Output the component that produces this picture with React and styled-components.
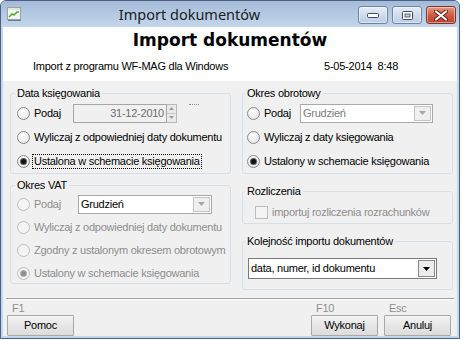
import React from 'react'
import styled, { createGlobalStyle } from 'styled-components'

const GlobalStyle = createGlobalStyle`
  html, body {
    margin: 0;
    padding: 0;
    background: #fff;
  }
  body {
    font-family: 'Liberation Sans', Arial, sans-serif;
    font-size: 11px;
    line-height: 13px;
    letter-spacing: -0.25px;
    color: #000;
  }
`

const Window = styled.div`
  width: 460px;
  height: 339px;
  box-sizing: border-box;
  border: 1px solid #4a6185;
  border-radius: 6px 6px 0 0;
  background: #c3d6ec;
  padding: 0 2px 2px;
  display: flex;
  flex-direction: column;
`

const TitleBar = styled.div`
  height: 26px;
  flex: none;
  display: flex;
  align-items: flex-start;
  box-sizing: border-box;
  margin: 0 -2px;
  padding: 5px 3px 0 6px;
  border-radius: 5px 5px 0 0;
  background: linear-gradient(#a4bbd8, #c3d6ec);
`

const TitleIcon = styled.svg`
  width: 14px;
  height: 14px;
  margin-top: 1px;
  flex: none;
`

const TitleText = styled.div`
  flex: 1;
  text-align: center;
  font-family: 'Noto Sans', 'Open Sans', sans-serif;
  font-size: 14.5px;
  line-height: 18px;
  letter-spacing: 0;
  color: #1c1c1c;
  margin-top: -1px;
`

const CaptionButtons = styled.div`
  display: flex;
  gap: 4px;
`

const CaptionButton = styled.span`
  width: 30px;
  height: 18px;
  box-sizing: border-box;
  border-radius: 3px;
  border: 1px solid ${(p) => (p.$close ? '#7e3528' : '#71849e')};
  background: ${(p) =>
    p.$close
      ? 'linear-gradient(#e49a86, #cf5c43 50%, #bf4128)'
      : 'linear-gradient(#e6eef7, #cfdcec 50%, #bccde3)'};
  box-shadow: inset 0 0 0 1px rgba(255, 255, 255, 0.45);
  display: flex;
  align-items: center;
  justify-content: center;
`

const Client = styled.div`
  flex: 1;
  background: #f0f0f0;
  display: flex;
  flex-direction: column;
`

const Header = styled.div`
  height: 54px;
  flex: none;
  background: #fff;
  display: flex;
  flex-direction: column;
`

const HeaderTitle = styled.h1`
  margin: 2px 0 0;
  font-family: 'DejaVu Sans', Verdana, sans-serif;
  font-weight: bold;
  font-size: 17px;
  line-height: 22px;
  letter-spacing: 0;
  text-align: center;
`

const Info = styled.div`
  margin-top: 9px;
  display: flex;
  justify-content: space-between;
  padding: 0 59px 0 30px;
`

const DateStamp = styled.span`
  white-space: pre;
`

const Body = styled.div`
  padding: 6px 0 0 7px;
  display: grid;
  grid-template-columns: 221px 211px;
  column-gap: 11px;
`

const Column = styled.div`
  display: flex;
  flex-direction: column;
  gap: ${(p) => p.$gap}px;
`

const Group = styled.fieldset`
  margin: 0;
  min-width: 0;
  border: 1px solid #d5dfe5;
  border-radius: 3px;
  padding: ${(p) => p.$pad};
  display: flex;
  flex-direction: column;
  gap: ${(p) => p.$gap || 0}px;
`

const Legend = styled.legend`
  padding: 0 2px;
  margin-left: ${(p) => p.$shift || -2}px;
  line-height: 13px;
`

const Row = styled.div`
  height: ${(p) => p.$h || 20}px;
  display: flex;
  align-items: center;
`

const RadioMark = styled.span`
  width: 13px;
  height: 13px;
  flex: none;
  box-sizing: border-box;
  border-radius: 50%;
  border: 1px solid ${(p) => (p.$disabled ? '#bdbdbd' : '#8a8a8a')};
  background: ${(p) =>
    p.$disabled
      ? '#f4f4f4'
      : 'radial-gradient(circle at 40% 35%, #ffffff, #ececec 60%, #d6d6d6)'};
  display: flex;
  align-items: center;
  justify-content: center;
  &::after {
    content: '';
    display: ${(p) => (p.$checked ? 'block' : 'none')};
    width: 5px;
    height: 5px;
    border-radius: 50%;
    background: ${(p) => (p.$disabled ? '#8e8e8e' : '#111')};
    box-shadow: 0 0 0 1px ${(p) => (p.$disabled ? '#b4b4b4' : '#5a5a5a')};
  }
`

const CheckMark = styled.span`
  width: 13px;
  height: 13px;
  flex: none;
  box-sizing: border-box;
  border: 1px solid #bdbdbd;
  background: #f4f4f4;
`

const OptionLabel = styled.span`
  margin-left: 3px;
  padding: 0 1px;
  width: ${(p) => (p.$w ? `${p.$w}px` : 'auto')};
  box-sizing: border-box;
  white-space: nowrap;
  color: ${(p) => (p.$disabled ? '#8d8d8d' : '#000')};
  outline: ${(p) => (p.$focused ? '1px dotted #000' : 'none')};
  outline-offset: 0;
`

const DateField = styled.div`
  width: 94px;
  height: 19px;
  box-sizing: border-box;
  border: 1px solid #a6a6a6;
  background: #f0f0f0;
  color: #6d6d6d;
  display: flex;
  align-items: center;
  justify-content: flex-end;
  padding-right: 2px;
`

const Spinner = styled.div`
  width: 10px;
  height: 19px;
  box-sizing: border-box;
  border: 1px solid #b8b8b8;
  border-left: none;
  display: flex;
  flex-direction: column;
`

const SpinHalf = styled.span`
  flex: 1;
  background: #e9e9e9;
  border-bottom: ${(p) => (p.$top ? '1px solid #c8c8c8' : 'none')};
  display: flex;
  align-items: center;
  justify-content: center;
`

const Dots = styled.span`
  align-self: flex-start;
  margin: 1px 0 0 12px;
  width: 10px;
  border-top: 1px dotted #8a8a8a;
`

const Combo = styled.div`
  width: ${(p) => p.$w}px;
  height: ${(p) => p.$h}px;
  box-sizing: border-box;
  border: 1px solid ${(p) => (p.$dark ? '#7a7a7a' : '#a9a9a9')};
  background: #fff;
  display: flex;
`

const ComboText = styled.span`
  flex: 1;
  padding-left: 2px;
  display: flex;
  align-items: center;
  color: ${(p) => (p.$muted ? '#7a7a7a' : '#000')};
`

const ComboButton = styled.span`
  width: 17px;
  margin: 1px;
  box-sizing: border-box;
  border: 1px solid ${(p) => (p.$dark ? '#8a8a8a' : '#c4c4c4')};
  background: ${(p) => (p.$dark ? '#ececec' : '#efefef')};
  display: flex;
  align-items: center;
  justify-content: center;
`

const Footer = styled.div`
  margin-top: 8px;
  padding: 0 6px 0 4px;
`

const Separator = styled.div`
  height: 1px;
  background: #a0a0a0;
  border-bottom: 1px solid #fff;
  margin: 0 -3px 2px -1px;
`

const Actions = styled.div`
  display: flex;
  gap: 6px;
`

const Spacer = styled.div`
  flex: 1;
`

const Action = styled.div`
  display: flex;
  flex-direction: column;
`

const KeyHint = styled.span`
  padding-left: 5px;
  color: #8f8f8f;
  height: 13px;
`

const Button = styled.button`
  width: 67px;
  height: 21px;
  margin: 0;
  padding: 0;
  font: inherit;
  letter-spacing: inherit;
  color: #000;
  border: 1px solid #a9a9a9;
  border-radius: 1px;
  background: linear-gradient(#f3f3f3, #e6e6e6 50%, #dcdcdc);
`

const Triangle = ({ color }) => (
  <svg width="7" height="4" viewBox="0 0 7 4">
    <polygon points="0,0 7,0 3.5,4" fill={color} />
  </svg>
)

const SpinArrow = ({ up }) => (
  <svg width="5" height="3" viewBox="0 0 5 3">
    <polygon points={up ? '0,3 5,3 2.5,0' : '0,0 5,0 2.5,3'} fill="#9a9a9a" />
  </svg>
)

const Radio = ({ checked, disabled, focused, w, children }) => (
  <>
    <RadioMark $checked={checked} $disabled={disabled} />
    <OptionLabel $disabled={disabled} $focused={focused} $w={w}>
      {children}
    </OptionLabel>
  </>
)

const App = () => {
  return (
    <>
      <GlobalStyle />
      <Window>
        <TitleBar>
          <TitleIcon viewBox="0 0 14 14">
            <rect x="0.5" y="0.5" width="13" height="12" fill="#f2f4f2" stroke="#9aa29a" />
            <rect x="1" y="1" width="12" height="2" fill="#dfe6df" />
            <polyline points="2,10 5,7 7,8 10,5 12,5" fill="none" stroke="#5aa83c" strokeWidth="1.5" />
            <line x1="1" y1="13.5" x2="14" y2="13.5" stroke="#6f7f8f" />
          </TitleIcon>
          <TitleText>Import dokumentów</TitleText>
          <CaptionButtons>
            <CaptionButton>
              <svg width="12" height="5" viewBox="0 0 12 5">
                <rect x="0.5" y="0.5" width="11" height="4" rx="1" fill="#fff" stroke="#3b4a5e" />
              </svg>
            </CaptionButton>
            <CaptionButton>
              <svg width="11" height="9" viewBox="0 0 11 9">
                <rect x="0.5" y="0.5" width="10" height="8" rx="1" fill="#fff" stroke="#3b4a5e" />
                <rect x="3" y="3" width="5" height="3" fill="#c3d3e6" stroke="#3b4a5e" strokeWidth="0.8" />
              </svg>
            </CaptionButton>
            <CaptionButton $close>
              <svg width="14" height="11" viewBox="0 0 14 11">
                <path d="M2 1.5 L12 9.5 M12 1.5 L2 9.5" stroke="#5c2118" strokeWidth="4" strokeLinecap="round" />
                <path d="M2 1.5 L12 9.5 M12 1.5 L2 9.5" stroke="#fff" strokeWidth="2.2" strokeLinecap="round" />
              </svg>
            </CaptionButton>
          </CaptionButtons>
        </TitleBar>

        <Client>
          <Header>
            <HeaderTitle>Import dokumentów</HeaderTitle>
            <Info>
              <span>Import z programu WF-MAG dla Windows</span>
              <DateStamp>5-05-2014  8:48</DateStamp>
            </Info>
          </Header>

          <Body>
            <Column $gap={5}>
              <Group $pad="3px 4px 2px 6px" $gap={4}>
                <Legend>Data księgowania</Legend>
                <Row>
                  <Radio w={40}>Podaj</Radio>
                  <DateField>31-12-2010</DateField>
                  <Spinner>
                    <SpinHalf $top>
                      <SpinArrow up />
                    </SpinHalf>
                    <SpinHalf>
                      <SpinArrow />
                    </SpinHalf>
                  </Spinner>
                  <Dots />
                </Row>
                <Row>
                  <Radio>Wyliczaj z odpowiedniej daty dokumentu</Radio>
                </Row>
                <Row>
                  <Radio checked focused>
                    Ustalona w schemacie księgowania
                  </Radio>
                </Row>
              </Group>

              <Group $pad="2px 4px 0 6px" $gap={3}>
                <Legend>Okres VAT</Legend>
                <Row>
                  <Radio disabled w={45}>
                    Podaj
                  </Radio>
                  <Combo $w={134} $h={19}>
                    <ComboText>Grudzień</ComboText>
                    <ComboButton>
                      <Triangle color="#a8a8a8" />
                    </ComboButton>
                  </Combo>
                </Row>
                <Row>
                  <Radio disabled>Wyliczaj z odpowiedniej daty dokumentu</Radio>
                </Row>
                <Row>
                  <Radio disabled>Zgodny z ustalonym okresem obrotowym</Radio>
                </Row>
                <Row>
                  <Radio disabled checked>
                    Ustalony w schemacie księgowania
                  </Radio>
                </Row>
              </Group>
            </Column>

            <Column $gap={11}>
              <Group $pad="3px 4px 2px 4px" $gap={4}>
                <Legend>Okres obrotowy</Legend>
                <Row>
                  <Radio w={37}>Podaj</Radio>
                  <Combo $w={133} $h={19}>
                    <ComboText $muted>Grudzień</ComboText>
                    <ComboButton>
                      <Triangle color="#a8a8a8" />
                    </ComboButton>
                  </Combo>
                </Row>
                <Row>
                  <Radio>Wyliczaj z daty księgowania</Radio>
                </Row>
                <Row>
                  <Radio checked>Ustalony w schemacie księgowania</Radio>
                </Row>
              </Group>

              <Group $pad="6px 4px 3px 12px">
                <Legend $shift={-10}>Rozliczenia</Legend>
                <Row $h={16}>
                  <CheckMark />
                  <OptionLabel $disabled>importuj rozliczenia rozrachunków</OptionLabel>
                </Row>
              </Group>

              <Group $pad="10px 4px 10px 5px">
                <Legend $shift={-3}>Kolejność importu dokumentów</Legend>
                <Combo $w={189} $h={21} $dark>
                  <ComboText>data, numer, id dokumentu</ComboText>
                  <ComboButton $dark>
                    <Triangle color="#000" />
                  </ComboButton>
                </Combo>
              </Group>
            </Column>
          </Body>

          <Footer>
            <Separator />
            <Actions>
              <Action>
                <KeyHint>F1</KeyHint>
                <Button>Pomoc</Button>
              </Action>
              <Spacer />
              <Action>
                <KeyHint>F10</KeyHint>
                <Button>Wykonaj</Button>
              </Action>
              <Action>
                <KeyHint>Esc</KeyHint>
                <Button>Anuluj</Button>
              </Action>
            </Actions>
          </Footer>
        </Client>
      </Window>
    </>
  )
}

export default App
